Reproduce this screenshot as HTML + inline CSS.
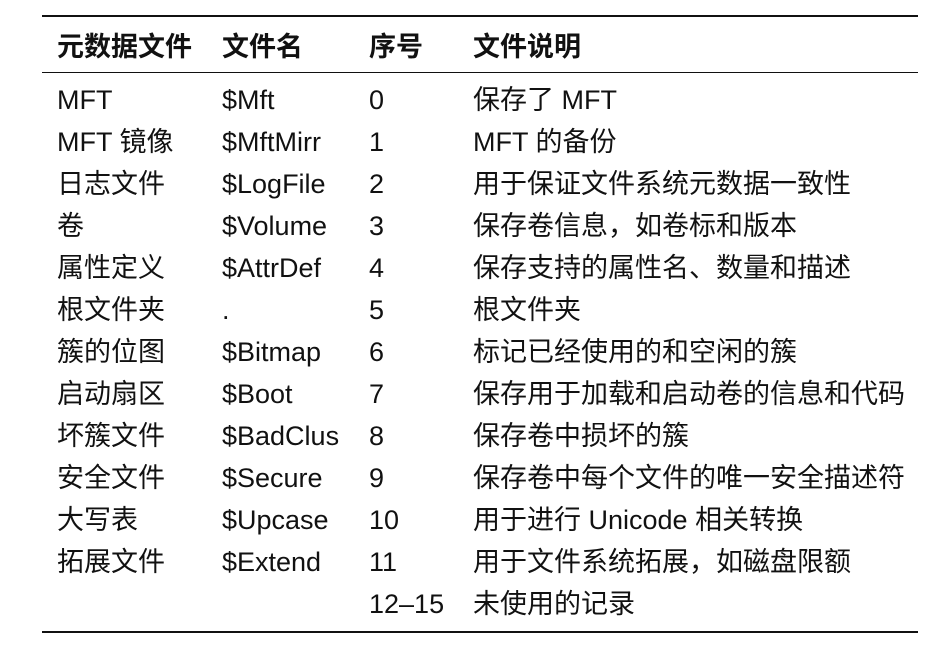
<!DOCTYPE html>
<html><head><meta charset="utf-8"><style>
body{margin:0;width:946px;height:653px;background:#fff;position:relative;overflow:hidden;font-family:"Liberation Sans","Noto Sans CJK SC",sans-serif;color:#111;font-size:27px}
.r{position:absolute;left:0;width:946px;height:42px;line-height:42px}
.r span{position:absolute;white-space:nowrap}
.c1{left:57px}.c2{left:222px}.c3{left:369px}.c4{left:473px}
.h{font-weight:bold}
.line{position:absolute;left:42px;width:876px;background:#111}
</style></head><body>
<div class="line" style="top:15px;height:2px"></div>
<div class="line" style="top:72px;height:1px"></div>
<div class="line" style="top:631px;height:2px"></div>
<div class="r h" style="top:26px"><span class="c1">元数据文件</span><span class="c2">文件名</span><span class="c3">序号</span><span class="c4">文件说明</span></div>
<div class="r" style="top:79px"><span class="c1">MFT</span><span class="c2">$Mft</span><span class="c3">0</span><span class="c4">保存了 MFT</span></div>
<div class="r" style="top:121px"><span class="c1">MFT 镜像</span><span class="c2">$MftMirr</span><span class="c3">1</span><span class="c4">MFT 的备份</span></div>
<div class="r" style="top:163px"><span class="c1">日志文件</span><span class="c2">$LogFile</span><span class="c3">2</span><span class="c4">用于保证文件系统元数据一致性</span></div>
<div class="r" style="top:205px"><span class="c1">卷</span><span class="c2">$Volume</span><span class="c3">3</span><span class="c4">保存卷信息，如卷标和版本</span></div>
<div class="r" style="top:247px"><span class="c1">属性定义</span><span class="c2">$AttrDef</span><span class="c3">4</span><span class="c4">保存支持的属性名、数量和描述</span></div>
<div class="r" style="top:289px"><span class="c1">根文件夹</span><span class="c2">.</span><span class="c3">5</span><span class="c4">根文件夹</span></div>
<div class="r" style="top:331px"><span class="c1">簇的位图</span><span class="c2">$Bitmap</span><span class="c3">6</span><span class="c4">标记已经使用的和空闲的簇</span></div>
<div class="r" style="top:373px"><span class="c1">启动扇区</span><span class="c2">$Boot</span><span class="c3">7</span><span class="c4">保存用于加载和启动卷的信息和代码</span></div>
<div class="r" style="top:415px"><span class="c1">坏簇文件</span><span class="c2">$BadClus</span><span class="c3">8</span><span class="c4">保存卷中损坏的簇</span></div>
<div class="r" style="top:457px"><span class="c1">安全文件</span><span class="c2">$Secure</span><span class="c3">9</span><span class="c4">保存卷中每个文件的唯一安全描述符</span></div>
<div class="r" style="top:499px"><span class="c1">大写表</span><span class="c2">$Upcase</span><span class="c3">10</span><span class="c4">用于进行 Unicode 相关转换</span></div>
<div class="r" style="top:541px"><span class="c1">拓展文件</span><span class="c2">$Extend</span><span class="c3">11</span><span class="c4">用于文件系统拓展，如磁盘限额</span></div>
<div class="r" style="top:583px"><span class="c3">12–15</span><span class="c4">未使用的记录</span></div>
</body></html>
